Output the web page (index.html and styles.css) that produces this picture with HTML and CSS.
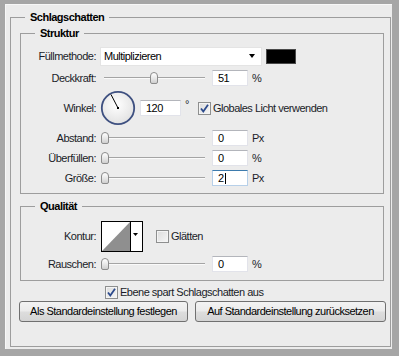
FILE: index.html
```html
<!DOCTYPE html>
<html lang="de">
<head>
<meta charset="utf-8">
<title>Schlagschatten</title>
<link rel="stylesheet" href="styles.css">
</head>
<body>
<div class="frame">
  <div class="win">
    <fieldset class="grp outer">
      <legend>Schlagschatten</legend>

      <fieldset class="grp sub struktur">
        <legend>Struktur</legend>

        <div class="row h20">
          <span class="lbl">Füllmethode:</span>
          <div class="select"><span>Multiplizieren</span><i class="arrow"></i></div>
          <div class="swatch"></div>
        </div>

        <div class="row h16">
          <span class="lbl">Deckkraft:</span>
          <div class="slider"><span class="thumb" style="left:50px"></span></div>
          <div class="input">51</div><span class="unit">%</span>
        </div>

        <div class="row h36">
          <span class="lbl">Winkel:</span>
          <svg class="dial" width="36" height="36" viewBox="0 0 36 36">
            <defs>
              <radialGradient id="dg" cx="45%" cy="40%" r="60%">
                <stop offset="0" stop-color="#ffffff"/>
                <stop offset="1" stop-color="#e2e2e2"/>
              </radialGradient>
            </defs>
            <circle cx="18" cy="18" r="16.2" fill="url(#dg)" stroke="#3e5080" stroke-width="1.8"/>
            <line x1="18" y1="18" x2="11" y2="4.5" stroke="#000" stroke-width="1"/>
            <rect x="17" y="17" width="2" height="2" fill="#000"/>
          </svg>
          <div class="input w41">120</div><span class="deg">°</span>
          <span class="check on"><svg width="11" height="11" viewBox="0 0 11 11"><path d="M2 5.5 L4.3 8.5 L9 1.8" fill="none" stroke="#2c4a8c" stroke-width="1.8"/></svg></span>
          <span class="ctext">Globales Licht verwenden</span>
        </div>

        <div class="row h16">
          <span class="lbl">Abstand:</span>
          <div class="slider"><span class="thumb" style="left:1px"></span></div>
          <div class="input">0</div><span class="unit">Px</span>
        </div>

        <div class="row h16">
          <span class="lbl">Überfüllen:</span>
          <div class="slider"><span class="thumb" style="left:1px"></span></div>
          <div class="input">0</div><span class="unit">%</span>
        </div>

        <div class="row h16">
          <span class="lbl">Größe:</span>
          <div class="slider"><span class="thumb" style="left:1px"></span></div>
          <div class="input focus">2<span class="caret"></span></div><span class="unit">Px</span>
        </div>
      </fieldset>

      <fieldset class="grp sub qual">
        <legend>Qualität</legend>

        <div class="row h31">
          <span class="lbl">Kontur:</span>
          <svg class="kontur" width="42" height="31" viewBox="0 0 42 31">
            <rect x="0.5" y="0.5" width="41" height="30" fill="#fff" stroke="#000"/>
            <polygon points="1,30 29,1 29,30" fill="#8f8f8f"/>
            <line x1="29.5" y1="0" x2="29.5" y2="31" stroke="#000"/>
            <polygon points="32,12 37,12 34.5,15" fill="#000"/>
          </svg>
          <span class="check k2"></span>
          <span class="ctext">Glätten</span>
        </div>

        <div class="row h16">
          <span class="lbl">Rauschen:</span>
          <div class="slider"><span class="thumb" style="left:1px"></span></div>
          <div class="input">0</div><span class="unit">%</span>
        </div>
      </fieldset>

      <div class="layer">
        <span class="check on"><svg width="11" height="11" viewBox="0 0 11 11"><path d="M2 5.5 L4.3 8.5 L9 1.8" fill="none" stroke="#2c4a8c" stroke-width="1.8"/></svg></span>
        <span class="ctext">Ebene spart Schlagschatten aus</span>
      </div>

      <div class="buttons">
        <button class="btn b1">Als Standardeinstellung festlegen</button>
        <button class="btn b2">Auf Standardeinstellung zurücksetzen</button>
      </div>
    </fieldset>
  </div>
</div>
</body>
</html>
```

FILE: styles.css
```css
* { box-sizing: border-box; }
html, body { margin: 0; padding: 0; }
body {
  width: 399px;
  height: 356px;
  overflow: hidden;
  background: #a7a7a7;
  font: 11px/13px "Liberation Sans", Arial, sans-serif;
  letter-spacing: -0.5px;
  color: #1a1c28;
}
.frame {
  width: 399px;
  height: 356px;
  padding: 4px 7px 7px 5px;
  background: #a6a6a6;
}
.win {
  height: 100%;
  display: flex;
  flex-direction: column;
  background: #ececec;
  border-left: 1px solid #f7f7f7;
  border-top: 1px solid #f7f7f7;
}
.grp {
  margin: 0;
  padding: 0;
  border: 1px solid #9d9d9d;
  min-width: 0;
}
.grp > legend {
  margin-left: 14px;
  padding: 0 5px;
  font-weight: bold;
  line-height: 13px;
  color: #000;
}
.outer {
  flex: 1;
  margin: 6px 1px 2px 4px;
}
.sub {
  margin-left: 9px;
  margin-right: 6px;
}
.struktur {
  margin-top: 3px;
  padding: 6px 0 7px;
}
.qual {
  margin-top: 6px;
  padding: 8px 0 8px;
}
.row {
  display: flex;
  align-items: center;
  margin-bottom: 4px;
}
.row:last-child { margin-bottom: 0; }
.h16 { height: 16px; }
.h20 { height: 20px; }
.h31 { height: 31px; }
.h36 { height: 36px; }
.lbl {
  width: 75px;
  text-align: right;
  flex: none;
  margin-right: 4px;
}
.select {
  width: 162px;
  height: 19px;
  background: #fff;
  border: 1px solid #e4e4e4;
  display: flex;
  align-items: center;
  padding-left: 3px;
  color: #000;
}
.select span { flex: 1; }
.arrow {
  width: 0;
  height: 0;
  border-left: 3.5px solid transparent;
  border-right: 3.5px solid transparent;
  border-top: 4px solid #000;
  margin-right: 6px;
}
.swatch {
  width: 30px;
  height: 15px;
  margin-left: 4px;
  background: #000;
  border: 1px solid #4a4a4a;
}
.slider {
  position: relative;
  width: 105px;
  height: 16px;
  flex: none;
}
.slider::before {
  content: "";
  position: absolute;
  left: 4px;
  right: 0;
  top: 7px;
  height: 1px;
  background: #a4a4a4;
  box-shadow: 0 1px 0 #fafafa;
}
.thumb {
  position: absolute;
  top: 2px;
  width: 8px;
  height: 12px;
  border: 1px solid #8c8c8c;
  border-radius: 4px 4px 2px 2px;
  background: linear-gradient(#ffffff, #e4e4e4 60%, #cfcfcf);
}
.input {
  width: 36px;
  height: 16px;
  margin-left: 7px;
  background: #fff;
  border: 1px solid #e2e3ea;
  border-top-color: #b3b5bb;
  padding-left: 5px;
  line-height: 14px;
  color: #000;
  flex: none;
  display: flex;
  align-items: center;
}
.input.w41 { width: 41px; margin-left: 4px; }
.input.focus {
  border-color: #b7d0e9;
  border-top-color: #3d7bad;
}
.caret {
  display: inline-block;
  width: 1px;
  height: 11px;
  background: #000;
  margin-left: 1px;
}
.unit { margin-left: 4px; color: #1a1c28; }
.deg { margin-left: 4px; align-self: flex-start; margin-top: 8px; }
.dial { flex: none; }
.check {
  width: 13px;
  height: 13px;
  flex: none;
  border: 1px solid #8e8f8f;
  background: linear-gradient(135deg, #dcdcdc, #f6f6f6);
  box-shadow: inset 0 0 0 1px #f4f4f4;
  display: inline-flex;
  align-items: center;
  justify-content: center;
}
.h36 .check { margin-left: 9px; }
.ctext { margin-left: 2px; }
.kontur { margin-left: 1px; flex: none; }
.check.k2 { margin-left: 13px; }
.layer {
  display: flex;
  align-items: center;
  height: 13px;
  margin: 5px 0 0 94px;
}
.layer .ctext { margin-left: 2px; }
.buttons {
  display: flex;
  gap: 7px;
  margin: 2px 0 0 8px;
}
.btn {
  height: 21px;
  margin: 0;
  padding: 0;
  border: 1px solid #707070;
  border-radius: 3px;
  background: linear-gradient(#f3f3f3, #ebebeb 48%, #dddddd 52%, #d4d4d4);
  font: inherit;
  letter-spacing: inherit;
  color: #000;
}
.b1 { width: 169px; }
.b2 { width: 191px; }
```
